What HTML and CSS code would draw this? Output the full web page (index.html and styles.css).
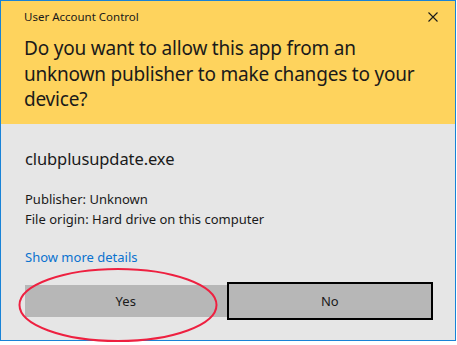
FILE: index.html
```html
<!DOCTYPE html>
<html>
<head>
<meta charset="utf-8">
<link rel="stylesheet" href="styles.css">
</head>
<body>
<div class="window">
  <div class="header">
    <div class="titlebar">
      <span class="title">User Account Control</span>
      <svg class="close" width="10" height="10" viewBox="0 0 10 10"><path d="M0.5 0.5 L9.5 9.5 M9.5 0.5 L0.5 9.5" stroke="#1a1a1a" stroke-width="1.1" fill="none"/></svg>
    </div>
    <div class="question">Do you want to allow this app from an unknown publisher to make changes to your device?</div>
  </div>
  <div class="content">
    <div class="appname">clubplusupdate.exe</div>
    <div class="info">
      <div>Publisher: Unknown</div>
      <div>File origin: Hard drive on this computer</div>
    </div>
    <div class="link">Show more details</div>
    <div class="buttons">
      <div class="btn yes">Yes</div>
      <div class="btn no">No</div>
    </div>
    <svg class="ring" width="210" height="80" viewBox="0 0 210 80"><ellipse cx="105" cy="40" rx="98.5" ry="36" fill="none" stroke="#ee2040" stroke-width="2"/></svg>
  </div>
</div>
</body>
</html>
```
FILE: styles.css
```css
html, body {
  margin: 0;
  padding: 0;
  background: #ffffff;
}
body {
  width: 457px;
  height: 345px;
  overflow: hidden;
  font-family: "Noto Sans", "Open Sans", sans-serif;
  color: #1a1a1a;
}
.window {
  width: 454px;
  height: 339px;
  border: 1px solid #1883d7;
  background: #e6e6e6;
  display: flex;
  flex-direction: column;
}
.header {
  background: #fed35d;
  padding: 8px 17px 11px 23px;
}
.titlebar {
  display: flex;
  justify-content: space-between;
  align-items: center;
  height: 16px;
  font-size: 11.5px;
  line-height: 16px;
}
.close {
  display: block;
}
.question {
  margin-top: 11px;
  font-size: 19px;
  line-height: 25.5px;
  letter-spacing: -0.2px;
  padding-right: 20px;
}
.content {
  position: relative;
  padding: 24px 22px 0 24px;
  flex: 1;
}
.appname {
  font-size: 16.5px;
  line-height: 22px;
  letter-spacing: -0.1px;
}
.info {
  margin-top: 19px;
  font-size: 13px;
  line-height: 20px;
}
.link {
  margin-top: 18px;
  font-size: 13px;
  line-height: 20px;
  color: #0a72cf;
}
.buttons {
  margin-top: 15px;
  display: flex;
  align-items: center;
}
.btn {
  background: #b7b7b7;
  font-size: 13px;
  display: flex;
  align-items: center;
  justify-content: center;
  box-sizing: border-box;
}
.yes {
  width: 202px;
  height: 32px;
}
.no {
  width: 207px;
  height: 38px;
  border: 2px solid #000000;
}
.ring {
  position: absolute;
  left: 12px;
  top: 141px;
}
```
